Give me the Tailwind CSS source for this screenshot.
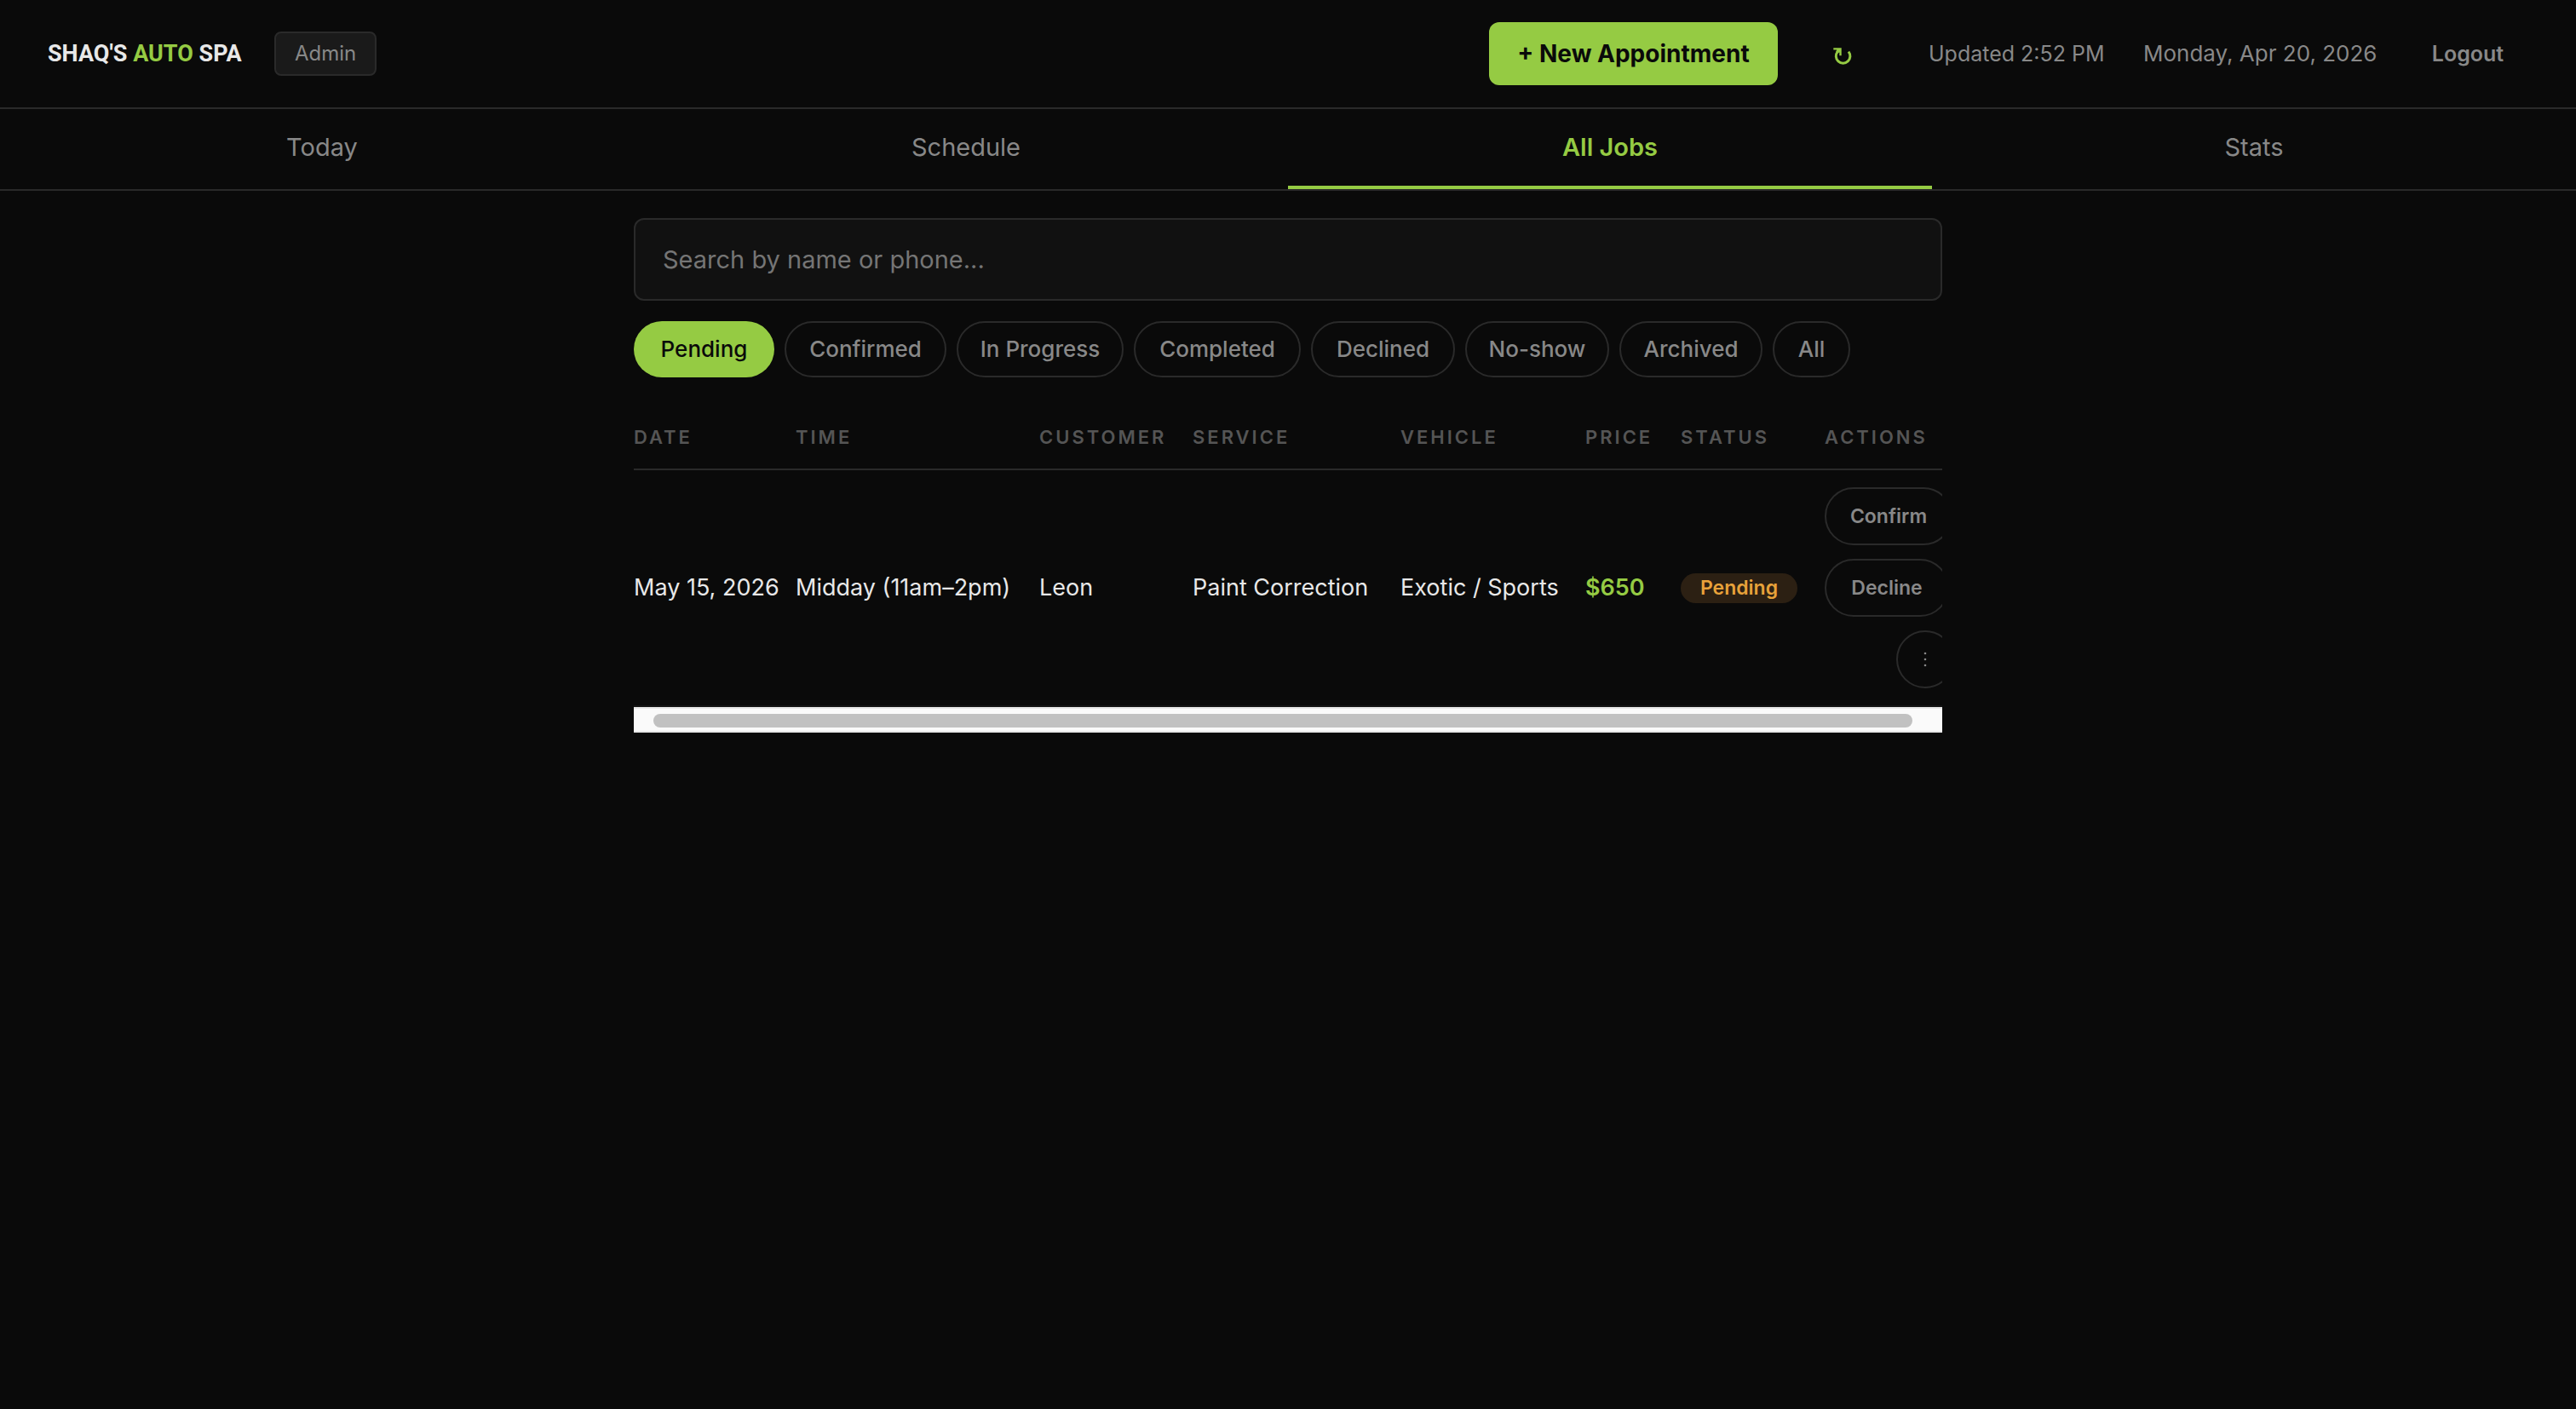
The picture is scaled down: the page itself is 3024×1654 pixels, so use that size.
<!DOCTYPE html>
<html lang="en">
<head>
<meta charset="utf-8">
<meta name="viewport" content="width=device-width, initial-scale=1">
<title>Shaq's Auto Spa Admin</title>
<script src="https://cdn.jsdelivr.net/npm/@tailwindcss/browser@4"></script>
</head>
<body class="min-h-screen bg-[#0a0a0a] font-['Inter',sans-serif] text-[27px] leading-8 text-[#e8e8e8]">
<header class="flex items-center justify-between border-b-2 border-[#2a2a2a] px-14 pt-[26px] pb-[26px]">
  <div class="flex items-center gap-[38px]">
    <h1 class="min-w-[228px] font-['Roboto',sans-serif] text-[27px] font-bold leading-10 whitespace-nowrap">SHAQ'S <span class="text-[#95cb43]">AUTO</span> SPA</h1>
    <span class="rounded-lg border-2 border-[#2a2a2a] bg-[#1a1a1a] px-[22px] py-2 text-[24px] text-[#888888]">Admin</span>
  </div>
  <div class="flex items-center whitespace-nowrap text-[#888888]">
    <button class="h-[74px] w-[339px] rounded-xl bg-[#95cb43] text-[28px] font-bold text-[#0a0a0a]">+ New Appointment</button>
    <button aria-label="Refresh" class="ml-8 flex h-[74px] w-[88px] items-center justify-center pt-2 text-[#95cb43]">
      <svg class="size-6" viewBox="0 0 24 24" fill="none"><path d="M6.200 5.600A8.300 8.300 0 1 0 19 5.600" stroke="currentColor" stroke-width="3"/><path d="M1.300 1.200H10.700V10.300H8.300V6.500L5.800 7.500L4.200 5.500L5.300 3.600H1.300Z" fill="currentColor"/></svg>
    </button>
    <span class="ml-[57px] w-[204px] text-[25px]">Updated 2:52 PM</span>
    <span class="ml-12 w-[278px] text-[26px]">Monday, Apr 20, 2026</span>
    <button class="ml-8 w-[142px] text-[25px] font-semibold">Logout</button>
  </div>
</header>
<nav class="grid grid-cols-4 border-b-2 border-[#2a2a2a] text-center text-[29px] text-[#888888]">
  <a href="#" class="border-b-4 border-transparent pt-[29px] pb-[29px]">Today</a>
  <a href="#" class="border-b-4 border-transparent pt-[29px] pb-[29px]">Schedule</a>
  <a href="#" aria-current="page" class="border-b-4 border-[#95cb43] pt-[29px] pb-[29px] font-semibold text-[#95cb43]">All Jobs</a>
  <a href="#" class="border-b-4 border-transparent pt-[29px] pb-[29px]">Stats</a>
</nav>
<main class="mx-auto max-w-[1600px] px-8 pt-8">
  <input type="search" aria-label="Search by name or phone" placeholder="Search by name or phone..." class="block h-[97px] w-full rounded-xl border-2 border-[#2a2a2a] bg-[#111111] px-8 text-[29px] placeholder:text-[#757575]">
  <div class="mt-6 flex flex-wrap gap-3 text-[26px] font-medium text-[#888888]">
    <button class="h-[66px] w-[165px] rounded-full bg-[#95cb43] text-[#0a0a0a]">Pending</button>
    <button class="h-[66px] w-[190px] rounded-full border-2 border-[#2a2a2a]">Confirmed</button>
    <button class="h-[66px] w-[196px] rounded-full border-2 border-[#2a2a2a]">In Progress</button>
    <button class="h-[66px] w-[196px] rounded-full border-2 border-[#2a2a2a]">Completed</button>
    <button class="h-[66px] w-[169px] rounded-full border-2 border-[#2a2a2a]">Declined</button>
    <button class="h-[66px] w-[169px] rounded-full border-2 border-[#2a2a2a]">No-show</button>
    <button class="h-[66px] w-[168px] rounded-full border-2 border-[#2a2a2a]">Archived</button>
    <button class="h-[66px] w-[91px] rounded-full border-2 border-[#2a2a2a]">All</button>
  </div>
  <div class="mt-8 overflow-hidden">
    <table class="-ml-4 w-[1582px] table-fixed border-collapse whitespace-nowrap text-left">
      <colgroup><col class="w-[190px]"><col class="w-[286px]"><col class="w-[180px]"><col class="w-[244px]"><col class="w-[217px]"><col class="w-[112px]"><col class="w-[169px]"><col class="w-[184px]"></colgroup>
      <thead class="border-b-2 border-[#2a2a2a] text-[22px] tracking-[3px] text-[#555555]">
        <tr class="h-[76px]"><th class="px-4 font-semibold">DATE</th><th class="px-4 font-semibold">TIME</th><th class="px-4 font-semibold">CUSTOMER</th><th class="px-4 font-semibold">SERVICE</th><th class="px-4 font-semibold">VEHICLE</th><th class="px-4 font-semibold">PRICE</th><th class="px-4 font-semibold">STATUS</th><th class="px-4 font-semibold">ACTIONS</th></tr>
      </thead>
      <tbody>
        <tr class="border-b-2 border-[#151515]">
          <td class="px-4">May 15, 2026</td>
          <td class="px-4">Midday (11am–2pm)</td>
          <td class="px-4">Leon</td>
          <td class="px-4">Paint Correction</td>
          <td class="px-4">Exotic / Sports</td>
          <td class="px-4 font-semibold text-[#95cb43]">$650</td>
          <td class="px-4"><span class="flex h-[35px] w-[137px] items-center justify-center rounded-full bg-[#2c2013] text-[23px] font-semibold text-[#e8a23a]">Pending</span></td>
          <td class="px-4 py-5">
            <div class="flex flex-col items-start gap-4 text-[23px] font-semibold text-[#888888]">
              <button class="h-[68px] w-[150px] rounded-full border-2 border-[#2a2a2a]">Confirm</button>
              <button class="h-[68px] w-[146px] rounded-full border-2 border-[#2a2a2a]">Decline</button>
              <button aria-label="More actions" class="flex size-[68px] items-center justify-center self-end rounded-full border-2 border-[#2a2a2a]">
                <svg class="h-5 w-1" viewBox="0 0 4 20" fill="currentColor"><circle cx="2" cy="3" r="1.300"/><circle cx="2" cy="10" r="1.300"/><circle cx="2" cy="17" r="1.300"/></svg>
              </button>
            </div>
          </td>
        </tr>
      </tbody>
    </table>
    <div class="h-[30px] border-y-2 border-[#e8e8e8] bg-[#fafafa] pt-1.5 pr-[35px] pl-[23px]"><div class="h-4 rounded-full bg-[#c1c1c1]"></div></div>
  </div>
</main>
</body>
</html>
